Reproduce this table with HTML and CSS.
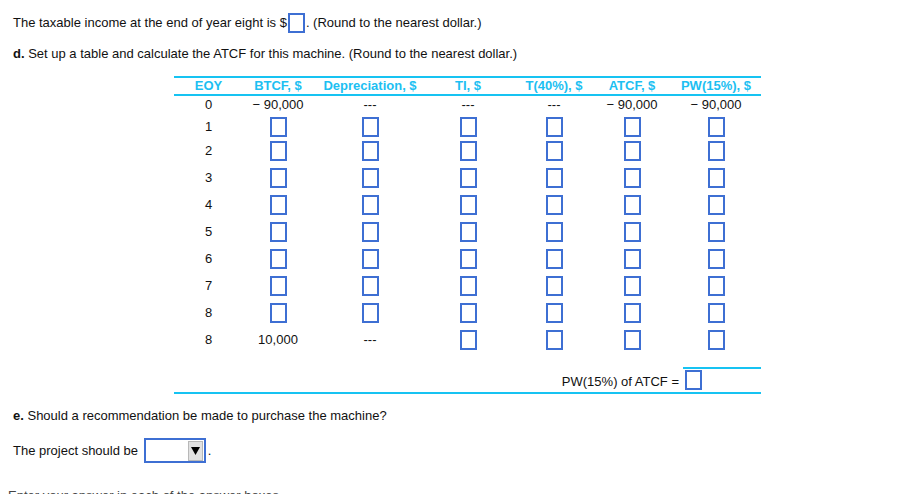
FILE: index.html
```html
<!DOCTYPE html>
<html>
<head>
<meta charset="utf-8">
<link rel="stylesheet" href="styles.css">
</head>
<body>
<div class="line first">The taxable income at the end of year eight is $<span class="box inline"></span>. (Round to the nearest dollar.)</div>
<div class="line second"><b>d.</b> Set up a table and calculate the ATCF for this machine. (Round to the nearest dollar.)</div>

<div class="table">
  <div class="row head">
    <div class="c">EOY</div><div class="c">BTCF, $</div><div class="c">Depreciation, $</div><div class="c">TI, $</div><div class="c">T(40%), $</div><div class="c">ATCF, $</div><div class="c last">PW(15%), $</div>
  </div>
  <div class="row r0">
    <div class="c">0</div><div class="c">− 90,000</div><div class="c">---</div><div class="c">---</div><div class="c">---</div><div class="c">− 90,000</div><div class="c last">− 90,000</div>
  </div>
  <div class="row r1">
    <div class="c">1</div><div class="c"><span class="box"></span></div><div class="c"><span class="box"></span></div><div class="c"><span class="box"></span></div><div class="c"><span class="box"></span></div><div class="c"><span class="box"></span></div><div class="c last"><span class="box"></span></div>
  </div>
  <div class="row">
    <div class="c">2</div><div class="c"><span class="box"></span></div><div class="c"><span class="box"></span></div><div class="c"><span class="box"></span></div><div class="c"><span class="box"></span></div><div class="c"><span class="box"></span></div><div class="c last"><span class="box"></span></div>
  </div>
  <div class="row">
    <div class="c">3</div><div class="c"><span class="box"></span></div><div class="c"><span class="box"></span></div><div class="c"><span class="box"></span></div><div class="c"><span class="box"></span></div><div class="c"><span class="box"></span></div><div class="c last"><span class="box"></span></div>
  </div>
  <div class="row">
    <div class="c">4</div><div class="c"><span class="box"></span></div><div class="c"><span class="box"></span></div><div class="c"><span class="box"></span></div><div class="c"><span class="box"></span></div><div class="c"><span class="box"></span></div><div class="c last"><span class="box"></span></div>
  </div>
  <div class="row">
    <div class="c">5</div><div class="c"><span class="box"></span></div><div class="c"><span class="box"></span></div><div class="c"><span class="box"></span></div><div class="c"><span class="box"></span></div><div class="c"><span class="box"></span></div><div class="c last"><span class="box"></span></div>
  </div>
  <div class="row">
    <div class="c">6</div><div class="c"><span class="box"></span></div><div class="c"><span class="box"></span></div><div class="c"><span class="box"></span></div><div class="c"><span class="box"></span></div><div class="c"><span class="box"></span></div><div class="c last"><span class="box"></span></div>
  </div>
  <div class="row">
    <div class="c">7</div><div class="c"><span class="box"></span></div><div class="c"><span class="box"></span></div><div class="c"><span class="box"></span></div><div class="c"><span class="box"></span></div><div class="c"><span class="box"></span></div><div class="c last"><span class="box"></span></div>
  </div>
  <div class="row">
    <div class="c">8</div><div class="c"><span class="box"></span></div><div class="c"><span class="box"></span></div><div class="c"><span class="box"></span></div><div class="c"><span class="box"></span></div><div class="c"><span class="box"></span></div><div class="c last"><span class="box"></span></div>
  </div>
  <div class="row">
    <div class="c">8</div><div class="c">10,000</div><div class="c">---</div><div class="c"><span class="box"></span></div><div class="c"><span class="box"></span></div><div class="c"><span class="box"></span></div><div class="c last"><span class="box"></span></div>
  </div>
  <div class="foot">
    <span class="foot-label">PW(15%) of ATCF =</span>
    <div class="foot-cell"><span class="box"></span></div>
  </div>
</div>

<div class="line sec-e"><b>e.</b> Should a recommendation be made to purchase the machine?</div>
<div class="line project">The project should be <span class="select"><span class="arrow"><svg width="9" height="8" viewBox="0 0 9 8"><path d="M0 0 H9 L4.5 8 Z" fill="#000"/></svg></span></span>.</div>
<div class="line cut">Enter your answer in each of the answer boxes.</div>
</body>
</html>
```

FILE: styles.css
```css
html, body {
  margin: 0;
  padding: 0;
  background: #fff;
}
body {
  font-family: "Liberation Sans", Arial, sans-serif;
  font-size: 13px;
  color: #111;
  overflow: hidden;
  height: 494px;
}
.line {
  padding-left: 13px;
  line-height: 16px;
}
.first {
  margin-top: 13px;
  display: flex;
  align-items: center;
  height: 20px;
  white-space: pre;
}
.box {
  display: inline-block;
  box-sizing: border-box;
  width: 17px;
  height: 20px;
  border: 2px solid #3e6fd3;
  background: #fff;
}
.box.inline {
  margin: 0 1px 0 1px;
}
.second {
  margin-top: 13px;
}
.table {
  margin-top: 14px;
  margin-left: 174px;
  width: 587px;
  border-bottom: 2px solid #16c3f2;
}
.row {
  display: grid;
  grid-template-columns: 69px 70px 114px 82px 90px 66px 96px;
  align-items: start;
}
.c {
  text-align: center;
  display: flex;
  justify-content: center;
  align-items: center;
}
.c.last {
  padding-left: 6px;
}
.head {
  border-top: 2px solid #16c3f2;
  border-bottom: 2px solid #16c3f2;
  height: 16px;
  color: #1dbff2;
  font-weight: bold;
}
.head .c {
  height: 16px;
}
.r0 .c {
  height: 18px;
}
.row .c {
  height: 27px;
  padding-top: 3px;
  box-sizing: border-box;
  align-items: flex-start;
  line-height: 20px;
}
.head .c, .r0 .c {
  padding-top: 0;
  align-items: center;
  line-height: 16px;
}
.head .c { height: 16px; }
.r0 .c { height: 18px; }
.r1 .c { height: 24px; }
.foot {
  margin-top: 13px;
  display: flex;
  justify-content: flex-end;
  align-items: center;
}
.foot-label {
  margin-right: 4px;
  padding-top: 3px;
}
.foot-cell {
  width: 76px;
  border-top: 2px solid #16c3f2;
  padding: 1px 0 2px 2px;
  display: flex;
}
.sec-e {
  margin-top: 14px;
}
.project {
  margin-top: 14px;
  display: flex;
  align-items: center;
  height: 25px;
  white-space: pre;
}
.select {
  display: inline-flex;
  justify-content: flex-end;
  align-items: center;
  box-sizing: border-box;
  width: 62px;
  height: 25px;
  border: 2px solid #3e6fd3;
  margin-left: 2px;
  margin-right: 2px;
  padding-right: 1px;
}
.arrow {
  box-sizing: border-box;
  width: 15px;
  height: 20px;
  background: #e1e1e1;
  border: 1px solid #b8b8b8;
  display: flex;
  align-items: center;
  justify-content: center;
}
.arrow svg {
  display: block;
}
.cut {
  margin-top: 25px;
  padding-left: 8px;
  color: #444;
}
```
